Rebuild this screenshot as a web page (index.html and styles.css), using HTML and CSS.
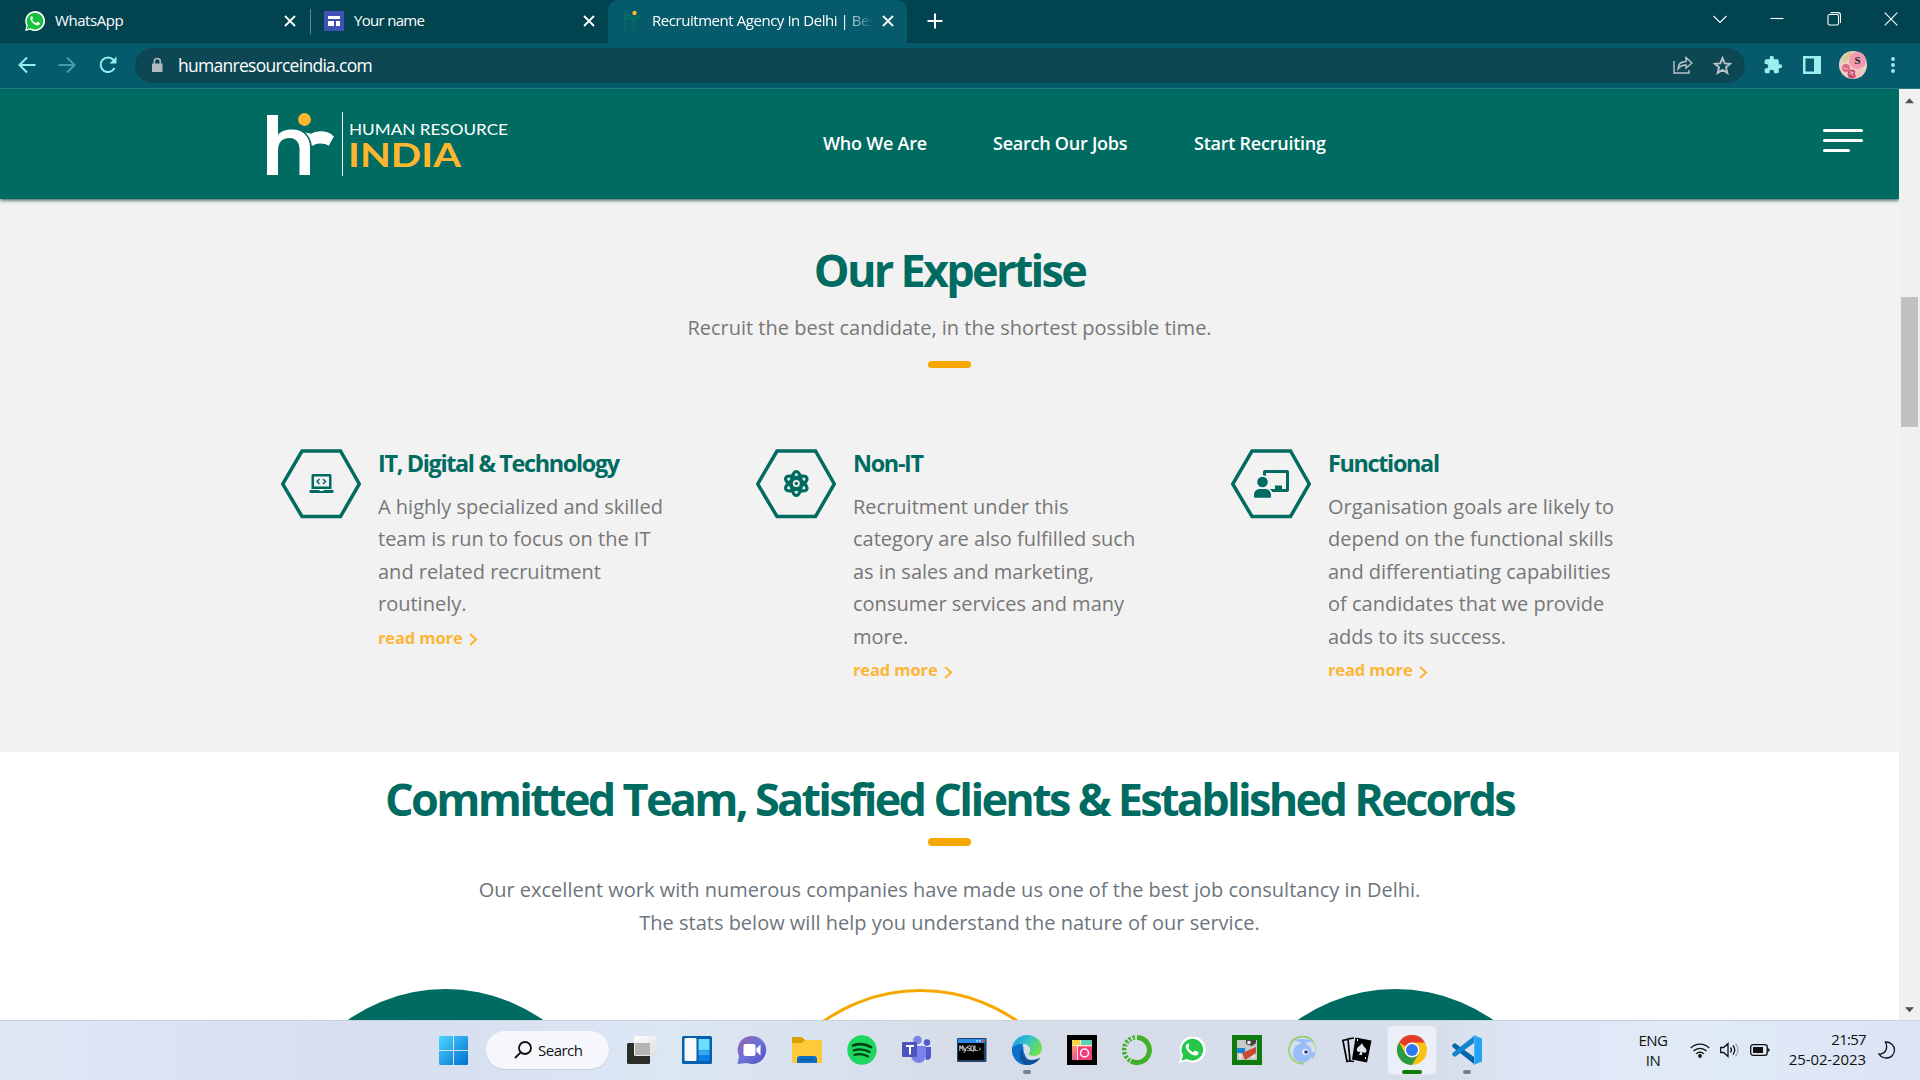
FILE: index.html
```html
<!DOCTYPE html>
<html lang="en">
<head>
<meta charset="utf-8">
<title>Recruitment Agency In Delhi</title>
<link rel="stylesheet" href="styles.css">
</head>
<body>
<div class="screen">
  <div class="tabs">
    <div class="tab tab-first">
      <svg class="fav" viewBox="0 0 32 32"><path fill="#fff" d="M0 32l2.300-8.200A15.900 15.900 0 1 1 8.200 29.800z"/><path fill="#16c13b" d="M2.800 29.200l1.700-6.200A13.300 13.300 0 1 1 9 27.600z"/><path fill="#fff" d="M11.400 8.500c-.7-.2-1.600.1-2.200 1-1.500 2.300-.5 5 1.600 7.800 3 3.900 6.500 6 9.700 5.700 1.800-.2 3.600-1.500 3.500-3.300 0-.7-.3-.8-3.700-2.400-.6-.3-.9-.1-2 1.400-.3.500-.7.500-1.300.2-2.300-1-4.200-2.700-5.300-4.700-.4-.8.900-1.500 1.200-2.600.1-.6-1-2.900-1.500-3.100z"/></svg>
      <span class="tab-title t1">WhatsApp</span>
      <svg class="close" viewBox="0 0 12 12"><path d="M1 1l10 10M11 1L1 11"/></svg>
    </div>
    <div class="tab tab-second">
      <svg class="fav" viewBox="0 0 20 20"><path fill="#3f51b5" d="M0 0h20v20H0z"/><path fill="#fff" d="M4 5h12v3H4zM4 10h6v5H4zM12 10h4v5h-4z"/></svg>
      <span class="tab-title t2">Your name</span>
      <svg class="close" viewBox="0 0 12 12"><path d="M1 1l10 10M11 1L1 11"/></svg>
    </div>
    <div class="tab tab-active">
      <svg class="fav" viewBox="0 0 20 20"><path fill="none" stroke="#006b61" stroke-width="2.600" d="M2 1v18M2 11c0-5 9-5 9 0v8M11 9c1-3 5-4 8-2"/><circle cx="11.500" cy="2" r="2.200" fill="#fdb62f"/></svg>
      <span class="tab-title t3">Recruitment Agency In Delhi | Bes</span>
      <svg class="close" viewBox="0 0 12 12"><path d="M1 1l10 10M11 1L1 11"/></svg>
    </div>
    <svg class="plus" viewBox="0 0 16 16"><path d="M8 .5v15M.5 8h15"/></svg>
    <div class="window-buttons">
      <svg viewBox="0 0 14 14"><path d="M.5 4L7 10.500 13.500 4"/></svg>
      <svg viewBox="0 0 14 14"><path d="M.5 6.500h13"/></svg>
      <svg viewBox="0 0 14 14"><rect x="1" y="2.500" width="10.500" height="10.500" rx="1.500"/><path d="M3.500 .6h7.500a2.500 2.500 0 0 1 2.500 2.500V11"/></svg>
      <svg viewBox="0 0 14 14"><path d="M.7 .7l12.600 12.600M13.300.7L.7 13.300"/></svg>
    </div>
  </div>

  <div class="toolbar">
    <svg class="nav-icon" viewBox="0 0 18 18"><path d="M17.500 9H2M9 1.500L1.500 9 9 16.500"/></svg>
    <svg class="nav-icon dim" viewBox="0 0 18 18"><path d="M.5 9H16M9 1.500L16.500 9 9 16.500"/></svg>
    <svg class="nav-icon" viewBox="0 0 18 18"><path d="M15.500 12A7.300 7.300 0 1 1 14.500 4"/><path class="solid" d="M17.500.5v7h-7z"/></svg>
    <div class="omnibox">
      <svg class="lock" viewBox="0 0 12 16"><path fill="#b3babd" d="M1 6.500h10.500v8.500H1z"/><path fill="none" stroke="#b3babd" stroke-width="1.500" d="M3.300 7V4.500a3 3 0 0 1 6 0V7"/></svg>
      <span class="url">humanresourceindia.com</span>
      <svg class="share" viewBox="0 0 20 18"><path d="M1 5v12h15v-3M5 13c0-5 3-7.500 8-7.500V1.500l6 5.500-6 5V9c-4 0-6 1-8 4z"/></svg>
      <svg class="star" viewBox="0 0 18 18"><path d="M9 2l2.100 5 5.200.4-4 3.400 1.300 5.200L9 13.200 4.400 16l1.300-5.200-4-3.400 5.200-.4z"/></svg>
    </div>
    <svg class="ext" viewBox="0 0 24 24"><path fill="#9beeed" d="M20.500 11H19V7a2 2 0 0 0-2-2h-4V3.500a2.500 2.500 0 0 0-5 0V5H4a2 2 0 0 0-2 2v3.800h1.500a2.700 2.700 0 0 1 0 5.400H2V20a2 2 0 0 0 2 2h3.800v-1.500a2.700 2.700 0 0 1 5.400 0V22H17a2 2 0 0 0 2-2v-4h1.500a2.500 2.500 0 0 0 0-5z"/></svg>
    <svg class="panel-icon" viewBox="0 0 18 18"><path fill="#9beeed" fill-rule="evenodd" d="M0 0h18v18H0zM2.500 2.500v13H11v-13z"/></svg>
    <svg class="avatar" viewBox="0 0 28 28"><circle cx="14" cy="14" r="14" fill="#e9d0c0"/><path fill="#d9c89a" d="M3 7l9-7 2 5L5 12z"/><circle cx="18.500" cy="9.500" r="8.500" fill="#f39ab0"/><circle cx="7" cy="17" r="4" fill="#e06a8a"/><circle cx="13" cy="23" r="4.500" fill="#cc4d70"/><circle cx="20" cy="22" r="4" fill="#f4c4c0"/><path stroke="#f7b6c6" fill="none" d="M4 17l5 1M10 23l5-2M12 20l2 5"/><text x="18.500" y="13" text-anchor="middle" class="avatar-letter">S</text></svg>
    <svg class="dots" viewBox="0 0 4 16"><g fill="#9beeed"><circle cx="2" cy="2" r="1.900"/><circle cx="2" cy="8" r="1.900"/><circle cx="2" cy="14" r="1.900"/></g></svg>
  </div>

  <div class="viewport">
    <div class="page">
      <header class="site-header">
        <svg class="logo" viewBox="0 0 244 66">
          <path fill="#fff" d="M2 4h11v20c3-4 8-5.500 14-5.500 10 0 18 6 18 17.500V64H34.500V38c0-7-4-11-10-11-8 0-11.500 5-11.500 13v24H2z"/>
          <path fill="#fff" stroke="#006b61" stroke-width="1.200" d="M38 20.500l8 1.500c8-4 19-3 23.500 3.500l-5.500 10c-5-3-13-3.500-17.500 1-.5-7-3-12-8.500-16z"/>
          <circle cx="39.500" cy="8.500" r="6.400" fill="#fdb62f"/>
          <path stroke="#fff" d="M77.500 1v64"/>
          <text x="84" y="23.500" class="logo-top" textLength="159" lengthAdjust="spacingAndGlyphs">HUMAN RESOURCE</text>
          <text x="83" y="56" class="logo-bottom" textLength="113" lengthAdjust="spacingAndGlyphs">INDIA</text>
        </svg>
        <nav class="site-nav"><a class="n1">Who We Are</a><a class="n2">Search Our Jobs</a><a class="n3">Start Recruiting</a></nav>
        <div class="menu"><i></i><i></i><i></i></div>
      </header>
      <section class="expertise">
        <h2>Our Expertise</h2>
        <p class="lead">Recruit the best candidate, in the shortest possible time.</p>
        <div class="bar"></div>
        <div class="cards">
          <article class="card">
            <svg class="hex" viewBox="0 0 80 70"><path class="hex-line" d="M21 2h38.500L78.300 35 59.500 67.500H21L1.700 35z"/><path fill="#006b61" fill-rule="evenodd" d="M32 25h17q1.500 0 1.500 1.500V40H30.500V26.500Q30.500 25 32 25zm1 2.500v10h15v-10zM28.500 41H38l1 1h3l1-1h9.500v1.500q0 1.500-1.500 1.500H30q-1.500 0-1.500-1.500z"/><path fill="none" stroke="#006b61" stroke-width="1.500" d="M38.500 30L36 32.500l2.500 2.500M42 30l2.500 2.500L42 35"/></svg>
            <div class="card-body">
              <h3>IT, Digital &amp; Technology</h3>
              <p>A highly specialized and skilled<br>team is run to focus on the IT<br>and related recruitment<br>routinely.</p>
              <a class="more">read more<svg viewBox="0 0 9 13"><path d="M1.200 1l5.800 5.500L1.200 12"/></svg></a>
            </div>
          </article>
          <article class="card">
            <svg class="hex" viewBox="0 0 80 70"><path class="hex-line" d="M21 2h38.500L78.300 35 59.500 67.500H21L1.700 35z"/><g fill="none" stroke="#006b61" stroke-width="3.200"><ellipse cx="40.300" cy="34.500" rx="5" ry="12"/><ellipse cx="40.300" cy="34.500" rx="5" ry="12" transform="rotate(60 40.300 34.500)"/><ellipse cx="40.300" cy="34.500" rx="5" ry="12" transform="rotate(120 40.300 34.500)"/></g><circle cx="40.300" cy="34.500" r="6" fill="#006b61"/><circle cx="40.300" cy="34.500" r="2.600" fill="#006b61" stroke="#f1f1f1" stroke-width="1.800"/></svg>
            <div class="card-body">
              <h3>Non-IT</h3>
              <p>Recruitment under this<br>category are also fulfilled such<br>as in sales and marketing,<br>consumer services and many<br>more.</p>
              <a class="more">read more<svg viewBox="0 0 9 13"><path d="M1.200 1l5.800 5.500L1.200 12"/></svg></a>
            </div>
          </article>
          <article class="card">
            <svg class="hex" viewBox="0 0 80 70"><path class="hex-line" d="M21 2h38.500L78.300 35 59.500 67.500H21L1.700 35z"/><g fill="#006b61"><circle cx="31.500" cy="33" r="5.300"/><path d="M23 48v-2c0-4 3-6 6-6h5c3 0 6 2 6 6v2q0 .7-1 .7H24q-1 0-1-.7zM32 25.500V23q0-2 2-2h22q2 0 2 2v18q0 2-2 2H41.500q-1-2-3-3H44v-3.500h7V40h4V24H35v3q-1.500-.8-3-.7z"/></g></svg>
            <div class="card-body">
              <h3>Functional</h3>
              <p>Organisation goals are likely to<br>depend on the functional skills<br>and differentiating capabilities<br>of candidates that we provide<br>adds to its success.</p>
              <a class="more">read more<svg viewBox="0 0 9 13"><path d="M1.200 1l5.800 5.500L1.200 12"/></svg></a>
            </div>
          </article>
        </div>
      </section>
      <section class="records">
        <h2>Committed Team, Satisfied Clients &amp; Established Records</h2>
        <div class="bar"></div>
        <p class="lead">Our excellent work with numerous companies have made us one of the best job consultancy in Delhi.<br>The stats below will help you understand the nature of our service.</p>
        <div class="circles"><i></i><i class="ring"></i><i></i></div>
      </section>
    </div>
    <div class="scrollbar"><svg viewBox="0 0 10 6"><path fill="#505050" d="M5 0l5 5.500H0z"/></svg><i></i><svg viewBox="0 0 10 6"><path fill="#505050" d="M5 5.500L10 0H0z"/></svg></div>
  </div>

  <footer class="taskbar">
    <svg class="win" viewBox="0 0 29 29"><defs><linearGradient id="gw" x1="0" y1="0" x2="29" y2="29" gradientUnits="userSpaceOnUse"><stop stop-color="#4cd6ff"/><stop offset="1" stop-color="#006fd0"/></linearGradient></defs><path fill="url(#gw)" d="M1 0h13v14H0V1zM15 0h13l1 1v13H15zM0 15h14v14H1l-1-1zM15 15h14v13l-1 1H15z"/></svg>
    <div class="search"><svg viewBox="0 0 18 18"><circle cx="11" cy="7" r="6"/><path d="M6.700 11.300L1 17"/></svg><span>Search</span></div>
    <div class="apps">
      <div class="app"><svg viewBox="0 0 30 30"><defs><linearGradient id="gt" x1="0" y1="0" x2="1" y2="1"><stop stop-color="#fff"/><stop offset="1" stop-color="#ddd"/></linearGradient></defs><rect y="8" width="23" height="21" rx="1.500" fill="#2c2c2a"/><rect x="7" y="1" width="23" height="20" rx="1.500" fill="url(#gt)"/><path fill="#b5b5b5" d="M8 8h15v12H8z"/></svg></div>
      <div class="app"><svg viewBox="0 0 30 30"><rect y="1" width="30" height="28" rx="1.500" fill="#0560ae"/><rect x="2.500" y="3" width="12" height="23" rx="1.500" fill="#f7f8fa"/><path fill="#6cdcff" d="M16.500 4h11v11.500h-11z"/><path fill="#2fa8f5" d="M16.500 16h11v4.500h-11z"/><path fill="#0a7fe8" d="M16.500 21h11v5h-11z"/></svg></div>
      <div class="app"><svg viewBox="0 0 30 30"><defs><linearGradient id="gc" x1="0" y1="0" x2="1" y2="1"><stop stop-color="#9a62a8"/><stop offset=".5" stop-color="#6b73d8"/><stop offset="1" stop-color="#5550c0"/></linearGradient></defs><path fill="url(#gc)" d="M15 1a14 14 0 1 1-5 27L.5 29 2 21A14 14 0 0 1 15 1z"/><rect x="6.500" y="9" width="12" height="12" rx="2" fill="#fff"/><path fill="#fff" d="M19.500 13.500l4-4v11l-4-4z"/></svg></div>
      <div class="app"><svg viewBox="0 0 30 30"><path fill="#dda000" d="M0 3q0-1 1-1h8q1 0 2 1l2 2v5H0z"/><path fill="#ffca3a" d="M0 8h10l3-3h16q1 0 1 1v22H0z"/><path fill="#0c6fc4" d="M5 28v-4q0-3 3-3h14q3 0 3 3v4z"/><path stroke="#064f93" d="M9 25h12"/></svg></div>
      <div class="app"><svg viewBox="0 0 30 30"><circle cx="15" cy="15" r="14.700" fill="#1ed760"/><path fill="none" stroke="#041" stroke-linecap="round" stroke-width="2.800" d="M6 10.500c6-2 13-1.300 18 1.600"/><path fill="none" stroke="#041" stroke-linecap="round" stroke-width="2.300" d="M6.700 15.300c5.500-1.600 11-1 16 1.700M7.500 19.800c4.500-1.300 9.500-.8 13.500 1.600"/></svg></div>
      <div class="app"><svg viewBox="0 0 30 30"><circle cx="15.500" cy="5" r="4.300" fill="#7b83eb"/><circle cx="25" cy="7.500" r="3.200" fill="#5059c9"/><path fill="#5059c9" d="M22 12h7v9q0 4-5 4z"/><path fill="#7b83eb" d="M9 11h15v9c0 5-4 8-7 8-5 0-8-4-8-8z"/><rect y="7" width="15" height="15" rx="1" fill="#4b53bc"/><path stroke="#fff" stroke-width="2" d="M4 11h8M8 11v8.500"/></svg></div>
      <div class="app"><svg viewBox="0 0 30 30"><rect y="3" width="29.500" height="24" rx="1" fill="#24446c"/><path fill="#2e8be8" d="M1 4h27v4H1z"/><path fill="#7fd0ff" d="M19 5h2v2h-2zM22 5h2v2h-2z"/><path fill="#f04a2c" d="M25 5h2v2h-2z"/><path d="M1 8h26v17H1z"/><text x="2" y="16" class="mysql" textLength="23">MySQL›</text></svg></div>
      <div class="app open"><svg viewBox="0 0 30 30"><defs><linearGradient id="ge" x1="0" y1="0" x2="1" y2=".5"><stop stop-color="#1b8fe0"/><stop offset=".5" stop-color="#30c2d0"/><stop offset="1" stop-color="#6fe050"/></linearGradient></defs><path fill="#0a70cc" d="M0 13C1 9 6 7 11 7.500c-1 8 3 16 8 22A15 15 0 0 1 0 13z"/><path fill="#124f9a" d="M12 12c-4 6 0 13 8 13 3 0 6-1 8.500-2.500C25 28 20 30 16 30 8 29 4 18 12 12z"/><path fill="url(#ge)" d="M0 13C1 5 8 0 15 0c9 0 15 6.500 15 13 0 5-4 8-8 8-4 0-6-1.500-5-3 2.500-3 1-8-5-9-5-.5-9.500 1-12 4z"/></svg></div>
      <div class="app"><svg viewBox="0 0 30 30"><defs><linearGradient id="gl" x1="0" y1="0" x2=".4" y2="1"><stop stop-color="#ffb040"/><stop offset=".5" stop-color="#fb7d78"/><stop offset="1" stop-color="#e050a8"/></linearGradient></defs><path d="M0 0h30v30H0z"/><path fill="url(#gl)" d="M5 5h20v20H5z"/><path fill="#f5d742" d="M5 5h8v5H5z"/><path fill="#5fcfb5" d="M14 5h11v5H14z"/><path fill="#f33b80" d="M11 12h14v13H11z"/><path stroke="#ffe8e0" d="M5 10.500h20M10.500 10.500V25M13.500 5v5"/><circle cx="17.500" cy="18" r="4" fill="none" stroke="#fff" stroke-width="1.500"/></svg></div>
      <div class="app"><svg viewBox="0 0 30 30"><path fill="none" stroke="#43b02a" stroke-width="5" d="M15 2.500a12.500 12.500 0 1 1-6 23.500"/><path fill="none" stroke="#43b02a" stroke-width="4.500" stroke-dasharray="2.500 1.500" d="M13 2.500A12.500 12.500 0 0 0 8 25.500"/><path fill="none" stroke="#d8dfeb" stroke-dasharray="2 2" d="M12 3A12.500 12.500 0 0 0 8 25"/></svg></div>
      <div class="app"><svg viewBox="0 0 32 32"><path fill="#fff" d="M2 30l2.300-8A14 14 0 1 1 10 27.800z"/><path fill="#25c748" d="M4.800 27.200L6.500 21.500A11.500 11.500 0 1 1 10.500 25.500z"/><path fill="#fff" d="M12 9c-.7-.2-1.400.1-2 1-1.300 2-.5 4.500 1.400 7 2.700 3.500 5.700 5 8.600 4.900 1.700-.2 3.200-1.500 3-3.100 0-.6-.4-.7-3.300-2.100-.6-.3-.9-.1-1.800 1.200-.3.400-.7.400-1.200.1-2-.9-3.600-2.300-4.600-4.100-.3-.7.800-1.300 1-2.300 0-.5-.7-2.500-1.100-2.600z"/></svg></div>
      <div class="app"><svg viewBox="0 0 30 30"><path fill="#107c10" d="M0 0h30v30H0z"/><path fill="#c8c8c8" d="M5 5h20v20H5z"/><path fill="#1684d8" d="M5 13h8v5H5z"/><path fill="#c94c32" d="M10 18l14-6v6l-11 7z"/><path fill="#444" d="M14 5h10v3l-4 3-6-2z"/><circle cx="17" cy="7.500" r="1.800" fill="#eee"/><path fill="#e9e5dc" d="M6 19l5 1-3 5zM18 23l5-4v4z"/></svg></div>
      <div class="app"><svg viewBox="0 0 30 30"><path fill="none" stroke="#94cf6c" stroke-width="1.800" d="M27 8A13.500 13.500 0 1 0 17 28.500"/><path fill="none" stroke="#b1d98e" d="M21 3A13 13 0 0 1 29 16M3 9c-3 9 2 18 10 19"/><circle cx="15.500" cy="18" r="9.500" fill="#98bdf8"/><path fill="#98bdf8" d="M15 10c-1-3-5-4-9-5 8-2 16-1 20 1-4 1-7 1-8 4zM22 18l7-1-3 7z"/><circle cx="18.500" cy="17" r="3" fill="#fff"/><circle cx="19" cy="17" r="1.800" fill="#263b60"/></svg></div>
      <div class="app"><svg viewBox="0 0 30 30"><path fill="none" stroke="#000" stroke-width="1.700" d="M7 26l-2 .5L.9 5.500 5 4.500M12 26.500l-4-.5L6 4l6-1"/><path d="M13.500 2.500L29.500 5.500 25 27.500 10 24.500z"/><path fill="#dce3ee" d="M20 8c1 4 5 5 4.500 8-.3 2-3 2.500-4.200.7L20 20h-3l1.500-3.500c-1.700 1-4 0-3.700-2 .3-3 4-3.500 5.200-6.500z"/><path fill="#fff" d="M15 4h1v2h-1zM23 22h1v2h-1z"/></svg></div>
      <div class="app active"><svg viewBox="0 0 30 30"><circle cx="15" cy="15" r="15" fill="#fbc116"/><path fill="#e33b2e" d="M15 15L2 7.500A15 15 0 0 1 28 7.500H15z"/><path fill="#2a9a45" d="M2 7.500A15 15 0 0 0 15 30l6.500-11.200L15 15l-6.500 3.700z"/><circle cx="15" cy="15" r="7.500" fill="#fff"/><circle cx="15" cy="15" r="6" fill="#2d78ed"/></svg></div>
      <div class="app open"><svg viewBox="0 0 30 30"><path fill="#0065a9" d="M0 10.500l2-2q.7-.5 1.500 0L22 22v7L.5 12z"/><path fill="#1285cc" d="M0 19.500l2 2q.7.500 1.500 0L22 8V1L.5 18z"/><path fill="#23a4f2" d="M21.500 0L30 3.500v23L21.500 30q.8-.8.800-2V2q0-1.200-.8-2z"/></svg></div>
    </div>
    <div class="lang">ENG<br>IN</div>
    <svg class="wifi" viewBox="0 0 20 16"><path d="M.8 6a13 13 0 0 1 18.400 0M3.500 9a9.200 9.200 0 0 1 13 0M6.300 11.800a5.200 5.200 0 0 1 7.400 0"/><circle cx="10" cy="14" r="1.900" class="dot"/></svg>
    <svg class="vol" viewBox="0 0 20 16"><path d="M.7 5.500h3L8 1.500v13l-4.300-4h-3zM10.500 5.500q2 2.500 0 5M13 3.500q3.500 4.500 0 9"/><path opacity=".3" d="M15.500 1.500q5 6.500 0 13"/></svg>
    <svg class="bat" viewBox="0 0 20 12"><rect x=".7" y=".7" width="16.500" height="10.600" rx="2.200"/><path class="dot" d="M3 3h10v6H3zM17.500 4l2 1v2l-2 1z"/></svg>
    <div class="clock"><span class="time">21:57</span><br>25-02-2023</div>
    <svg class="moon" viewBox="0 0 18 18"><path d="M7.500 1c5 0 9 3.500 9 8s-3.500 8-8 8c-3.500 0-6-1.500-7.500-4 6 .5 9.500-5.500 6.500-12z"/></svg>
  </footer>
</div>
</body>
</html>
```
FILE: styles.css
```css
* { box-sizing: border-box; }
body { margin: 0; font-family: "Open Sans", "Noto Sans", sans-serif; overflow: hidden; }
svg { display: block; flex: none; }
h2, h3, p { margin: 0; }
.screen { width: 1920px; height: 1080px; display: flex; flex-direction: column; overflow: hidden; }

/* browser tab strip */
.tabs { height: 43px; background: #01434f; display: flex; align-items: flex-start; flex: none; }
.tab { height: 43px; display: flex; align-items: center; color: #fff; flex: none; }
.tab-first { width: 310px; padding: 0 14px 2px 25px; }
.tab-second { width: 298px; padding: 0 13px 1px 13px; border-left: 1px solid #5a878f; height: 25px; margin-top: 9px; }
.tab-active { width: 299px; padding: 0 13px 2px 15px; background: #055a6c; border-radius: 10px 10px 0 0; }
.fav { width: 20px; height: 20px; margin-right: 10px; }
.tab-title { flex: 1; font-size: 15px; white-space: nowrap; line-height: 22px; padding-bottom: 2px; }
.t1 { letter-spacing: -.45px; }
.t2 { letter-spacing: -.7px; }
.tab-active .fav { margin-right: 9px; }
.t3 { letter-spacing: -.45px; -webkit-mask-image: linear-gradient(90deg, #000 192px, transparent 222px); mask-image: linear-gradient(90deg, #000 192px, transparent 222px); }
.close { width: 12px; height: 12px; fill: none; stroke: #fff; stroke-width: 1.8; }
.plus { width: 16px; height: 16px; margin: 13px 0 0 20px; fill: none; stroke: #fff; stroke-width: 2; }
.window-buttons { display: flex; gap: 43px; margin: 12px 22px 0 auto; }
.window-buttons svg { width: 14px; height: 14px; fill: none; stroke: #fff; stroke-width: 1.1; }

/* address row */
.toolbar { height: 46px; background: #055a6c; border-bottom: 1px solid #257783; display: flex; align-items: center; padding: 0 25px 2px 18px; flex: none; }
.nav-icon { width: 18px; height: 18px; margin-right: 22px; fill: none; stroke: #93eeee; stroke-width: 2; }
.nav-icon .solid { fill: #93eeee; stroke: none; }
.nav-icon.dim { opacity: .45; }
.nav-icon:nth-child(3) { margin-left: 1px; margin-right: 18px; }
.omnibox { width: 1610px; height: 35px; border-radius: 18px; background: #0e4754; display: flex; align-items: center; padding: 0 13px 0 16px; margin-top: 1px; }
.lock { width: 12px; height: 16px; }
.url { margin-left: 15px; color: #fff; font-size: 17.500px; letter-spacing: -.72px; }
.share { width: 20px; height: 18px; margin-left: auto; margin-right: 20px; fill: none; stroke: #b9c4c8; stroke-width: 1.400; }
.star { width: 19px; height: 19px; fill: none; stroke: #b9c4c8; stroke-width: 1.800; }
.ext { width: 20px; height: 20px; margin-left: 18px; }
.panel-icon { width: 18px; height: 18px; margin-left: 20px; }
.avatar { width: 28px; height: 28px; margin-left: 18px; }
.avatar-letter { font: bold 11px "Liberation Serif", serif; fill: #222; }
.dots { width: 4px; height: 16px; margin-left: auto; }

/* page */
.viewport { flex: 1; min-height: 0; display: flex; }
.page { width: 1899px; overflow: hidden; background: #fff; }
.site-header { position: relative; height: 110px; background: #006b61; box-shadow: 0 1px 4px rgba(0, 50, 50, .9); display: flex; }
.logo { width: 244px; height: 66px; margin: 22px 0 0 265px; }
.logo-top { font: 400 15.500px Lato, sans-serif; fill: #fff; }
.logo-bottom { font: 700 33px Lato, sans-serif; fill: #fdb62f; }
.site-nav { display: flex; margin: 41px 0 0 314px; color: #fff; font-weight: 600; font-size: 18px; line-height: 26px; letter-spacing: -.24px; white-space: nowrap; }
.n1 { width: 170px; }
.n2 { width: 201px; }
.menu { margin: 40px 36px 0 auto; width: 40px; display: flex; flex-direction: column; gap: 7px; }
.menu i { height: 3px; border-radius: 2px; background: #fff; }
.menu i:last-child { width: 27px; }
.expertise { height: 553px; background: #f2f2f2; padding-top: 43.500px; text-align: center; }
h2 { font-size: 45px; line-height: 54px; font-weight: 700; color: #006b61; letter-spacing: -2.700px; white-space: nowrap; }
.lead { font-size: 20px; line-height: 32.500px; color: #777; white-space: nowrap; }
.expertise .lead { margin-top: 15.500px; }
.bar { width: 43px; height: 8px; border-radius: 4px; background: #f7a800; margin: 15.500px auto 0; }
.expertise .bar { height: 7px; margin-top: 16px; }
.cards { display: grid; grid-template-columns: repeat(3, 475px); margin: 79px 0 0 281px; text-align: left; }
.card { display: flex; align-items: flex-start; }
.hex { width: 80px; height: 70px; margin: 2px 17px 0 0; }
.hex-line { fill: none; stroke: #006b61; stroke-width: 3.500; }
h3 { font-size: 23.400px; line-height: 32px; font-weight: 700; color: #006b61; letter-spacing: -1.330px; white-space: nowrap; }
.card p { margin-top: 12px; font-size: 20px; line-height: 32.500px; color: #777; white-space: nowrap; }
.more { display: flex; align-items: center; margin-top: 4px; font-size: 16.500px; line-height: 26px; font-weight: 700; letter-spacing: -.12px; color: #fdb536; }
.more svg { width: 9px; height: 13px; margin: 4px 0 0 6px; fill: none; stroke: #fdb536; stroke-width: 2.200; }
.records { text-align: center; padding-top: 19.500px; }
.records .bar { margin-top: 12px; }
.records .lead { margin-top: 28.500px; color: #6c757d; }
.circles { display: grid; grid-template-columns: repeat(3, 339px); gap: 136px; margin: 50px 0 0 275.500px; }
.circles i { height: 339px; border-radius: 50%; background: #006b61; }
.circles .ring { background: none; border: 3px solid #f7a800; }
.scrollbar { width: 21px; background: #f0f0f0; display: flex; flex-direction: column; align-items: center; padding: 9px 0 7px; }
.scrollbar svg { width: 9px; height: 6px; }
.scrollbar i { width: 17px; height: 130px; margin-top: 193px; margin-bottom: auto; background: #c1c1c1; }

/* taskbar */
.taskbar { height: 60px; flex: none; display: flex; align-items: center; border-top: 1px solid #c9d2df; padding: 0 19px 1px 439px; color: #111; background: linear-gradient(90deg, #dfe8f5 0, #d6def0 20%, #dce7f4 35%, #d6dde9 50%, #d7deeb 75%, #dfe6f6 80%, #e0ebf7 88%, #dbe4f5 100%); }
.win { width: 29px; height: 29px; }
.search { width: 123px; height: 38px; margin-left: 18px; border-radius: 19px; background: #f5f7fc; display: flex; align-items: center; padding-left: 28px; font-size: 15px; letter-spacing: -.5px; box-shadow: 0 1px 1px #c5cede; }
.search svg { width: 18px; height: 18px; margin-right: 6px; fill: none; stroke: #111; stroke-width: 1.800; }
.search span { padding-bottom: 1px; }
.apps { display: grid; grid-template-columns: repeat(16, 48px); gap: 7px; margin-left: 9px; }
.app { height: 48px; border-radius: 5px; display: flex; flex-direction: column; align-items: center; padding-top: 9px; }
.app svg { width: 30px; height: 30px; }
.open::after, .active::after { content: ""; width: 8px; height: 4px; border-radius: 2px; background: #7b818b; margin-top: 5px; }
.active { background: #eaeff8; box-shadow: 0 0 0 1px #dfe4ee; }
.active::after { width: 20px; background: #107c10; }
.mysql { font: 7.500px "DejaVu Sans Mono", monospace; fill: #fff; }
.lang { margin-left: auto; width: 34px; font-size: 15px; line-height: 20px; letter-spacing: -.5px; text-align: center; white-space: nowrap; padding-bottom: 1px; }
.wifi, .vol, .bat, .moon { fill: none; stroke: #111; stroke-width: 1.300; }
.dot { fill: #111; stroke: none; }
.wifi { width: 20px; height: 16px; margin-left: 20px; }
.vol { width: 20px; height: 16px; margin-left: 10px; }
.bat { width: 20px; height: 12px; margin-left: 10px; }
.clock { margin-left: 16px; width: 80px; font-size: 15px; line-height: 20px; letter-spacing: -.1px; text-align: right; white-space: nowrap; padding-bottom: 3px; }
.time { letter-spacing: -.7px; }
.moon { width: 18px; height: 18px; margin-left: 12px; margin-right: 5px; }
```
